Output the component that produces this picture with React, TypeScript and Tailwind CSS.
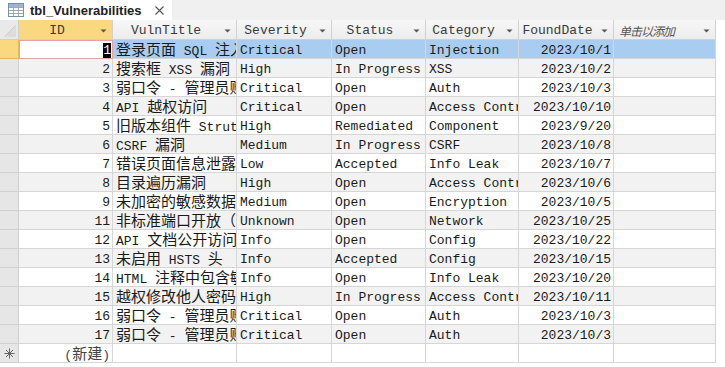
import React from 'react';

type Row = {
  id: number;
  title: string;
  severity: string;
  status: string;
  category: string;
  date: string;
};

const rows: Row[] = [
  { id: 1, title: '登录页面 SQL 注入', severity: 'Critical', status: 'Open', category: 'Injection', date: '2023/10/1' },
  { id: 2, title: '搜索框 XSS 漏洞', severity: 'High', status: 'In Progress', category: 'XSS', date: '2023/10/2' },
  { id: 3, title: '弱口令 - 管理员账户', severity: 'Critical', status: 'Open', category: 'Auth', date: '2023/10/3' },
  { id: 4, title: 'API 越权访问', severity: 'Critical', status: 'Open', category: 'Access Control', date: '2023/10/10' },
  { id: 5, title: '旧版本组件 Struts2', severity: 'High', status: 'Remediated', category: 'Component', date: '2023/9/20' },
  { id: 6, title: 'CSRF 漏洞', severity: 'Medium', status: 'In Progress', category: 'CSRF', date: '2023/10/8' },
  { id: 7, title: '错误页面信息泄露', severity: 'Low', status: 'Accepted', category: 'Info Leak', date: '2023/10/7' },
  { id: 8, title: '目录遍历漏洞', severity: 'High', status: 'Open', category: 'Access Control', date: '2023/10/6' },
  { id: 9, title: '未加密的敏感数据传输', severity: 'Medium', status: 'Open', category: 'Encryption', date: '2023/10/5' },
  { id: 11, title: '非标准端口开放（8080）', severity: 'Unknown', status: 'Open', category: 'Network', date: '2023/10/25' },
  { id: 12, title: 'API 文档公开访问', severity: 'Info', status: 'Open', category: 'Config', date: '2023/10/22' },
  { id: 13, title: '未启用 HSTS 头', severity: 'Info', status: 'Accepted', category: 'Config', date: '2023/10/15' },
  { id: 14, title: 'HTML 注释中包含敏感信息', severity: 'Info', status: 'Open', category: 'Info Leak', date: '2023/10/20' },
  { id: 15, title: '越权修改他人密码', severity: 'High', status: 'In Progress', category: 'Access Control', date: '2023/10/11' },
  { id: 16, title: '弱口令 - 管理员账户', severity: 'Critical', status: 'Open', category: 'Auth', date: '2023/10/3' },
  { id: 17, title: '弱口令 - 管理员账户', severity: 'Critical', status: 'Open', category: 'Auth', date: '2023/10/3' },
];

// column widths incl. right border
const cols = [
  { key: 'id', label: 'ID', w: 'w-[94px]' },
  { key: 'title', label: 'VulnTitle', w: 'w-[124px]' },
  { key: 'severity', label: 'Severity', w: 'w-[95px]' },
  { key: 'status', label: 'Status', w: 'w-[94px]' },
  { key: 'category', label: 'Category', w: 'w-[93px]' },
  { key: 'date', label: 'FoundDate', w: 'w-[95px]' },
];

const CJK = /[\u3000-\u9fff\uff00-\uffef]/;

// SimSun-like mixed text: CJK runs get the full-width size
function Mixed({ text }: { text: string }) {
  const parts = text.split(/([\u3000-\u9fff\uff00-\uffef]+)/).filter(Boolean);
  return (
    <span className="whitespace-pre">
      {parts.map((p, i) =>
        CJK.test(p) ? (
          <span key={i} className="font-['Noto_Sans_CJK_SC',sans-serif] text-[15px] leading-[18px]">
            {p}
          </span>
        ) : (
          <span key={i}>{p}</span>
        )
      )}
    </span>
  );
}

function Arrow() {
  return (
    <div className="flex w-[17px] shrink-0 items-center justify-center">
      <svg width="7" height="4" viewBox="0 0 7 4">
        <path d="M0.5 0.5 L6.5 0.5 L3.5 3.5 Z" fill="#555" />
      </svg>
    </div>
  );
}

function TableIcon() {
  return (
    <svg width="16" height="14" viewBox="0 0 16 14">
      <rect x="0.5" y="0.5" width="15" height="13" fill="#fff" stroke="#7b8fa8" />
      <rect x="1" y="1" width="14" height="3" fill="#9cb6d8" />
      <path d="M1 4.5 H15 M1 7.5 H15 M1 10.5 H15 M5.5 1 V13 M10.5 1 V13" stroke="#9aa9bb" strokeWidth="1" />
    </svg>
  );
}

function NewStar() {
  return (
    <svg width="11" height="11" viewBox="0 0 11 11">
      <path d="M5.5 0.5 V10.5 M0.5 5.5 H10.5 M2 2 L9 9 M9 2 L2 9" stroke="#666" strokeWidth="1" />
    </svg>
  );
}

const cellBase = "box-border h-[19px] shrink-0 border-r border-b border-[#d6d6d6] overflow-hidden whitespace-nowrap flex items-center pl-[3px] pr-[2px] pt-[3px]";

export default function App() {
  return (
    <div className="w-[725px] h-[367px] overflow-hidden bg-white font-['Liberation_Mono','Noto_Sans_CJK_SC',monospace] text-[13px] text-[#1a1a1a]">
      {/* tab strip */}
      <div className="flex h-[20px] bg-[#f0f0f0]">
        <div className="flex w-[172px] items-center bg-white pl-[8px] pr-[6px]">
          <TableIcon />
          <span className="ml-[6px] font-['Liberation_Sans',sans-serif] text-[13px] font-bold leading-none text-[#222]">
            tbl_Vulnerabilities
          </span>
          <div className="ml-auto flex h-[14px] w-[14px] items-center justify-center">
            <svg width="9" height="9" viewBox="0 0 9 9">
              <path d="M0.5 0.5 L8.5 8.5 M8.5 0.5 L0.5 8.5" stroke="#555" strokeWidth="1.1" />
            </svg>
          </div>
        </div>
      </div>

      {/* header row */}
      <div className="flex h-[20px]">
        <div className="box-border flex h-[20px] w-[19px] shrink-0 items-end justify-end border-r border-b border-[#cfcfcf] bg-[#e9e9e9] p-[2px]">
          <svg width="12" height="12" viewBox="0 0 12 12">
            <path d="M0 12 L12 0 L12 12 Z" fill="#dcdcdc" />
            <path d="M0.5 11.5 L11.5 0.5" stroke="#d0d0d0" />
          </svg>
        </div>
        {cols.map((c) => (
          <div
            key={c.key}
            className={`box-border flex h-[20px] shrink-0 items-center border-r border-b border-[#d0d0d0] pt-[2px] text-[#3a3a3a] ${c.w} ${
              c.key === 'id' ? 'bg-[#fad87f]' : 'bg-gradient-to-b from-[#f7f7f7] to-[#ececec]'
            }`}
          >
            <div className="flex-1 overflow-hidden whitespace-nowrap text-center">{c.label}</div>
            <Arrow />
          </div>
        ))}
        <div className="box-border flex h-[20px] w-[102px] shrink-0 items-center border-r border-b border-[#d0d0d0] pt-[2px] bg-gradient-to-b from-[#f7f7f7] to-[#ececec]">
          <div className="flex-1 pl-[5px] font-['Noto_Sans_CJK_SC',sans-serif] text-[12px] italic tracking-[-1px] text-[#555]">
            单击以添加
          </div>
          <Arrow />
        </div>
        <div className="flex-1 bg-white" />
      </div>

      {/* data rows */}
      {rows.map((r, i) => {
        const selected = i === 0;
        const stripe = i % 2 === 1 ? 'bg-[#f2f2f2]' : 'bg-white';
        const bg = selected ? 'bg-[#a9cdf0]' : stripe;
        return (
          <div key={r.id} className="flex h-[19px]">
            <div
              className={`box-border h-[19px] w-[19px] shrink-0 border-r border-b ${
                selected ? 'border-[#e2b85c] bg-[#fad87f]' : 'border-[#d0d0d0] bg-[#e6e6e6]'
              }`}
            />
            {selected ? (
              <div className="box-border flex h-[19px] w-[94px] shrink-0 items-center justify-end border border-[#e7a3a3] bg-white pr-[1px] pt-[1px]">
                <span className="bg-black leading-[15px] text-white">{r.id}</span>
              </div>
            ) : (
              <div className={`${cellBase} w-[94px] justify-end ${stripe}`}>{r.id}</div>
            )}
            <div className={`${cellBase} w-[124px] ${bg}`}>
              <Mixed text={r.title} />
            </div>
            <div className={`${cellBase} w-[95px] ${bg}`}>{r.severity}</div>
            <div className={`${cellBase} w-[94px] ${bg}`}>{r.status}</div>
            <div className={`${cellBase} w-[93px] ${bg}`}>{r.category}</div>
            <div className={`${cellBase} w-[95px] justify-end ${bg}`}>{r.date}</div>
            <div className={`${cellBase} w-[102px] ${bg}`} />
            <div className="flex-1 bg-white" />
          </div>
        );
      })}

      {/* new record row */}
      <div className="flex h-[19px]">
        <div className="box-border flex h-[19px] w-[19px] shrink-0 items-center justify-center border-r border-b border-[#d0d0d0] bg-[#e6e6e6]">
          <NewStar />
        </div>
        <div className={`${cellBase} w-[94px] justify-end bg-white text-[#444]`}>
          <Mixed text="(新建)" />
        </div>
        <div className={`${cellBase} w-[124px] bg-white`} />
        <div className={`${cellBase} w-[95px] bg-white`} />
        <div className={`${cellBase} w-[94px] bg-white`} />
        <div className={`${cellBase} w-[93px] bg-white`} />
        <div className={`${cellBase} w-[95px] bg-white`} />
        <div className={`${cellBase} w-[102px] bg-white`} />
        <div className="flex-1 bg-white" />
      </div>
    </div>
  );
}
